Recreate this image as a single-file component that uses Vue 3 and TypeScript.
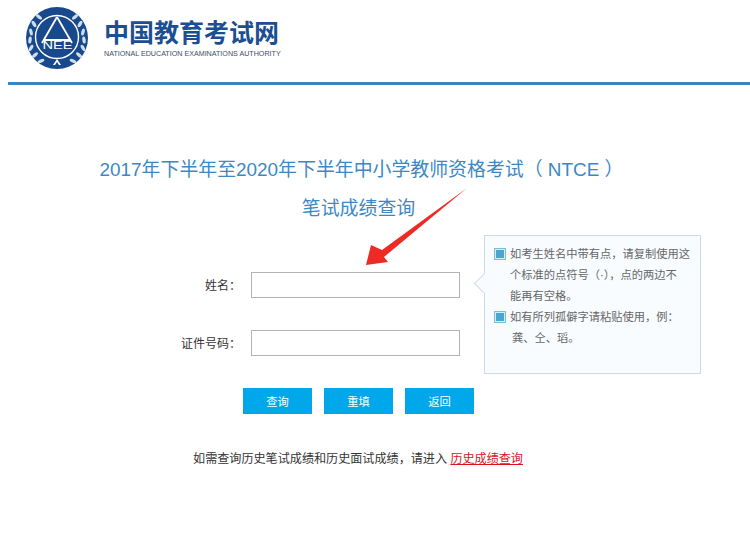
<script setup lang="ts">
import { ref } from 'vue'

const name = ref('')
const idNumber = ref('')

// laurel leaves on the left side, mirrored in the template
const leaves = [
  { x: 5, y: 41, r: 30 },
  { x: 4, y: 33, r: 8 },
  { x: 5, y: 25, r: -12 },
  { x: 8, y: 17, r: -32 },
  { x: 13, y: 10, r: -50 },
  { x: 9, y: 48, r: 48 },
  { x: 15, y: 54, r: 64 },
]
</script>

<template>
  <div class="page">
    <header class="top">
      <svg class="emblem" width="62" height="62" viewBox="0 0 62 62">
        <circle cx="31" cy="31" r="31" fill="#17498c" />
        <circle cx="31" cy="30" r="21.5" fill="none" stroke="#fff" stroke-width="1.4" />
        <path d="M31 10 L16 36 M31 10 L46 36 M17 33 H45" stroke="#fff" stroke-width="1.8" fill="none" />
        <text x="31.5" y="42" class="emblem-text" text-anchor="middle" textLength="30" lengthAdjust="spacingAndGlyphs">NEE</text>
        <path d="M31 52 L27 58 H29 L31 55 L33 58 H35 Z" fill="#fff" />
        <g fill="#cfdcec">
          <g v-for="(leaf, i) in leaves" :key="i">
            <ellipse :cx="leaf.x" :cy="leaf.y" rx="1.7" ry="3.6" :transform="`rotate(${leaf.r} ${leaf.x} ${leaf.y})`" />
            <ellipse :cx="62 - leaf.x" :cy="leaf.y" rx="1.7" ry="3.6" :transform="`rotate(${-leaf.r} ${62 - leaf.x} ${leaf.y})`" />
          </g>
        </g>
      </svg>
      <div class="brand">
        <div class="brand-cn">中国教育考试网</div>
        <div class="brand-en">NATIONAL EDUCATION EXAMINATIONS AUTHORITY</div>
      </div>
    </header>

    <main class="content">
      <h1 class="title">
        2017年下半年至2020年下半年中小学教师资格考试（ NTCE ）
        <span class="title-sub">笔试成绩查询</span>
      </h1>

      <div class="query">
        <form class="form" @submit.prevent>
          <label class="row">
            <span class="label">姓名：</span>
            <input v-model="name" class="field" type="text" />
          </label>
          <label class="row">
            <span class="label">证件号码：</span>
            <input v-model="idNumber" class="field" type="text" />
          </label>
          <div class="actions">
            <button class="btn" type="submit">查询</button>
            <button class="btn" type="reset">重填</button>
            <button class="btn" type="button">返回</button>
          </div>
        </form>

        <aside class="note">
          <span class="note-tip"></span>
          <p class="note-item">如考生姓名中带有点，请复制使用这个标准的点符号（·），点的两边不<br />能再有空格。</p>
          <p class="note-item">如有所列孤僻字请粘贴使用，例：<br /><span class="note-chars">龚、仝、瑫。</span></p>
        </aside>
      </div>

      <p class="history">如需查询历史笔试成绩和历史面试成绩，请进入 <a class="history-link" href="#">历史成绩查询</a></p>
    </main>

    <svg class="arrow" width="110" height="85" viewBox="0 0 110 85">
      <polygon points="104,3 19,65 8,60 3,80 25,77 21,72" fill="#ee2a24" />
    </svg>
  </div>
</template>

<style scoped>
.page {
  position: relative;
  width: 750px;
  height: 537px;
  overflow: hidden;
  background: #fff;
  font-family: "Liberation Sans", "Noto Sans CJK SC", sans-serif;
  color: #333;
}

.top {
  display: flex;
  align-items: flex-start;
  gap: 16px;
  height: 75px;
  margin-left: 8px;
  padding: 7px 0 0 18px;
  border-bottom: 3px solid #3d84bd;
}

.emblem {
  flex: none;
}

.emblem-text {
  font-size: 11px;
  fill: #fff;
}

.brand {
  padding-top: 11px;
}

.brand-cn {
  font-size: 25px;
  line-height: 30px;
  font-weight: 700;
  color: #1c4f92;
}

.brand-en {
  margin-top: 1px;
  font-size: 7.15px;
  line-height: 10px;
  color: #3c4f66;
  white-space: nowrap;
}

.content {
  padding-top: 66px;
}

.title {
  width: 723px;
  margin: 0;
  font-size: 18.9px;
  line-height: 38px;
  font-weight: 400;
  text-align: center;
  color: #3d88c4;
}

.title-sub {
  display: block;
  margin-top: 1px;
  padding-right: 6px;
}

.query {
  display: flex;
  align-items: flex-start;
  margin-top: 7px;
}

.form {
  width: 484px;
  padding-top: 37px;
  box-sizing: border-box;
}

.row {
  display: flex;
  align-items: center;
  height: 25px;
  margin-bottom: 33px;
}

.label {
  width: 241px;
  font-size: 12px;
  text-align: right;
}

.field {
  width: 209px;
  height: 26px;
  margin-left: 10px;
  padding: 0 6px;
  box-sizing: border-box;
  border: 1px solid #b4b4b4;
  outline: none;
  background: #fff;
}

.actions {
  display: flex;
  gap: 12px;
  margin-left: 243px;
  margin-top: 33px;
}

.btn {
  width: 69px;
  height: 26px;
  padding: 0;
  border: none;
  background: #00a7ea;
  color: #fff;
  font-family: inherit;
  font-size: 11.25px;
  cursor: pointer;
}

.note {
  position: relative;
  width: 217px;
  height: 139px;
  padding: 8px 5px 0 25px;
  box-sizing: border-box;
  border: 1px solid #cdd9e8;
  background: #f8fcff;
  color: #666;
  font-size: 11.25px;
  line-height: 21px;
}

.note-tip {
  position: absolute;
  left: -8px;
  top: 40px;
  width: 14px;
  height: 14px;
  background: #f8fcff;
  border-left: 1px solid #cdd9e8;
  border-bottom: 1px solid #cdd9e8;
  transform: rotate(45deg);
}

.note-item {
  position: relative;
  margin: 0;
}

.note-item::before {
  content: "";
  position: absolute;
  left: -16px;
  top: 4px;
  width: 8px;
  height: 8px;
  border: 2px solid #d3ecf6;
  outline: 1px solid #7dbdd8;
  outline-offset: -1px;
  background: #47a7d2;
}

.note-chars {
  padding-left: 2px;
}

.history {
  width: 716px;
  margin: 35px 0 0;
  font-size: 12.1px;
  line-height: 20px;
  text-align: center;
}

.history-link {
  color: #d8151f;
  text-decoration: underline;
}

.arrow {
  position: absolute;
  left: 363px;
  top: 185px;
}
</style>
